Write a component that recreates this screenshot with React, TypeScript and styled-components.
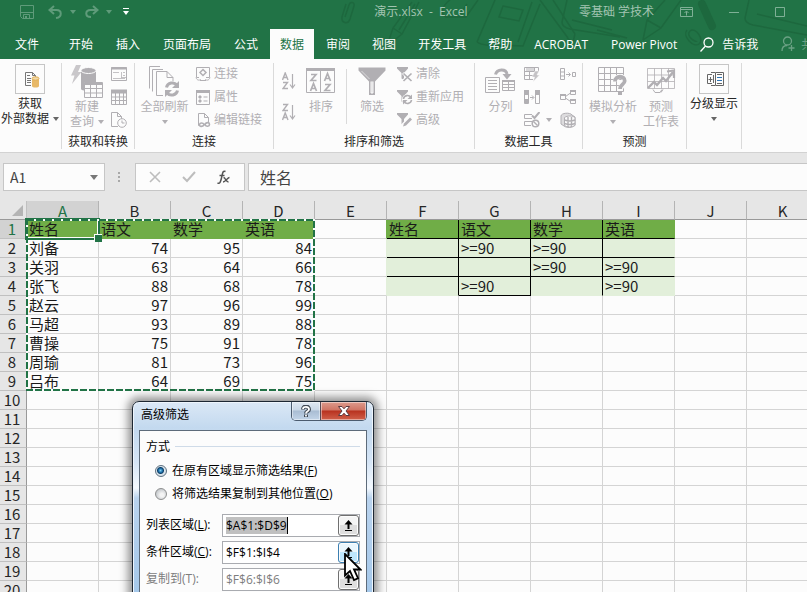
import React from "react";
import styled, { createGlobalStyle } from "styled-components";

const GREEN = "#217346";
const ICON = "#b1afb3";
const INK = "#333333";

const Global = createGlobalStyle`
  * { box-sizing: border-box; }
  body { margin: 0; }
  button, input { font: inherit; color: inherit; margin: 0; }
  button { padding: 0; border: 0; background: none; }
  svg { display: block; flex: none; }
`;

const Page = styled.div`
  display: flex;
  flex-direction: column;
  height: 100vh;
  overflow: hidden;
  background: #fcfcfc;
  font: 12px/15px "Open Sans", "Noto Sans CJK SC", sans-serif;
  color: ${INK};
`;

/* ---------- window header ---------- */

const Header = styled.header`
  position: relative;
  flex: none;
  background: ${GREEN};
  color: #ffffff;
`;

const Pattern = styled.svg`
  position: absolute;
  top: 0;
  right: 0;
`;

const TitleBar = styled.div`
  position: relative;
  display: flex;
  align-items: center;
  height: 23px;
  color: #a2c4b1;
  white-space: nowrap;
`;

const QuickAccess = styled.div`
  display: flex;
  align-items: center;
  gap: 8px;
  width: 263px;
  padding-left: 20px;
  flex: none;
`;

const IconButton = styled.button`
  display: flex;
  align-items: center;
  justify-content: center;
`;

const SaveButton = styled(IconButton)`
  margin-right: 6px;
`;

const UndoGroup = styled.div`
  display: flex;
  align-items: center;
  gap: 7px;
`;

const Title = styled.h1`
  flex: 1;
  margin: 0;
  font-size: 12px;
  font-weight: 400;
  text-align: center;
  white-space: pre;
`;

const WindowControls = styled.div`
  display: flex;
  align-items: center;
  gap: 36px;
  margin: 0 22px 0 26px;
`;

const Tabs = styled.nav`
  position: relative;
  display: flex;
  height: 36px;
  padding: 6px 0 0 5px;
  white-space: nowrap;
`;

const TabGroup = styled.div<{ $gap: number; $after: number }>`
  display: flex;
  gap: ${(p) => p.$gap}px;
  margin-right: ${(p) => p.$after}px;
`;

const Tab = styled.button<{ $active?: boolean }>`
  display: flex;
  align-items: center;
  gap: 8px;
  padding: 0 10px;
  height: 30px;
  color: ${(p) => (p.$active ? GREEN : "#ffffff")};
  background: ${(p) => (p.$active ? "#fcfcfc" : "transparent")};
`;

const ShareTab = styled(Tab)`
  gap: 6px;
  color: #6ba184;
`;

/* ---------- ribbon ---------- */

const Ribbon = styled.div`
  display: flex;
  flex: none;
  padding-top: 3px;
  border-bottom: 1px solid #d2d2d2;
  background: #fcfcfc;
  white-space: nowrap;
`;

const Group = styled.section<{ $width: number }>`
  position: relative;
  flex: none;
  display: flex;
  flex-direction: column;
  width: ${(p) => p.$width}px;
  border-right: 1px solid #dadada;
  margin: 1px 0 3px;
`;

const GroupBody = styled.div<{ $pad: number; $gap: number }>`
  display: flex;
  align-items: flex-start;
  height: 69px;
  margin-top: -1px;
  padding-left: ${(p) => p.$pad}px;
  gap: ${(p) => p.$gap}px;
`;

const GroupLabel = styled.h2`
  margin: 3px 0 0;
  font-size: 12px;
  font-weight: 400;
  text-align: center;
  line-height: 15px;
  color: #262626;
`;

const BigButton = styled.button<{ $on?: boolean; $width: number }>`
  display: flex;
  flex-direction: column;
  align-items: center;
  width: ${(p) => p.$width}px;
  height: 69px;
  color: ${(p) => (p.$on ? "#262626" : ICON)};
`;

const IconSlot = styled.span<{ $height: number }>`
  display: flex;
  justify-content: center;
  align-items: center;
  height: ${(p) => p.$height}px;
`;

const FramedIcon = styled.span`
  display: block;
  border: 1px solid #c6c6c6;
`;

const Line = styled.span`
  display: flex;
  align-items: center;
  justify-content: center;
  gap: 4px;
  height: 15px;
`;

const SmallColumn = styled.div`
  display: flex;
  flex-direction: column;
`;

const SmallButton = styled.button`
  display: flex;
  align-items: center;
  gap: 3px;
  height: 23px;
  color: ${ICON};
`;

const SortColumn = styled.div`
  display: flex;
  flex-direction: column;
  gap: 13px;
  padding-top: 10px;
`;

const Divider = styled.div`
  width: 1px;
  height: 55px;
  margin-top: 7px;
  background: #dadada;
`;

const Caret = ({ color = ICON }: { color?: string }) => (
  <svg width="6" height="4" viewBox="0 0 6 4" aria-hidden="true">
    <path d="M0 0h6L3 4z" fill={color} />
  </svg>
);

/* ---------- formula bar ---------- */

const FormulaBar = styled.div`
  display: flex;
  flex: none;
  padding: 10px 0 10px 3px;
  background: #e6e6e6;
`;

const Box = styled.div`
  display: flex;
  align-items: center;
  height: 28px;
  border: 1px solid #c6c6c6;
  background: #fcfcfc;
`;

const NameBox = styled(Box)`
  width: 102px;
  padding-right: 6px;
`;

const NameInput = styled.input`
  flex: 1;
  min-width: 0;
  border: 0;
  padding: 0 0 0 6px;
  background: none;
  font: 14px/20px "Noto Sans CJK SC", sans-serif;
  color: #444;
  outline: none;
`;

const Grip = styled.svg`
  margin: 9px 14px 0 13px;
`;

const FormulaButtons = styled(Box)`
  width: 110px;
  justify-content: space-around;
  padding: 0 2px;
  margin-right: 3px;
`;

const FormulaField = styled(Box)`
  flex: 1;
  border-right: 0;
`;

const FormulaInput = styled.input`
  width: 100%;
  border: 0;
  padding: 0 0 0 11px;
  background: none;
  font: 16px/24px "Noto Sans CJK SC", sans-serif;
  color: #444;
  outline: none;
`;

/* ---------- sheet ---------- */

const Sheet = styled.main`
  position: relative;
  flex: 1;
  min-height: 0;
  overflow: hidden;
  background: #fcfcfc;
`;

const Grid = styled.table`
  border-collapse: separate;
  border-spacing: 0;
  table-layout: fixed;
  width: 819px;
  font: 15px/18px "Noto Sans CJK SC", sans-serif;
  color: #1a1a1a;
`;

const RowCol = styled.col`
  width: 27px;
`;

const DataCol = styled.col`
  width: 72px;
`;

const Corner = styled.td`
  height: 19px;
  padding: 0 0 0 12px;
  background: #e6e6e6;
  border-right: 1px solid #c0c0c0;
  border-bottom: 1px solid #999;
`;

const ColHead = styled.th<{ $active: boolean }>`
  height: 19px;
  padding: 2px 0 0;
  font-weight: 400;
  line-height: 16px;
  text-align: center;
  color: ${(p) => (p.$active ? GREEN : "#262626")};
  background: ${(p) => (p.$active ? "#d2d2d2" : "#e6e6e6")};
  border-right: 1px solid #b4b4b4;
  border-bottom: 1px solid #999;
`;

const RowHead = styled.th<{ $active: boolean }>`
  height: 19px;
  padding: 0 2px 0 0;
  font-weight: 400;
  text-align: center;
  color: ${(p) => (p.$active ? GREEN : "#262626")};
  background: ${(p) => (p.$active ? "#d2d2d2" : "#e6e6e6")};
  border-right: 1px solid #999;
  border-bottom: 1px solid #c0c0c0;
`;

const Cell = styled.td<{ $fill: string; $right: string; $bottom: string; $number: boolean }>`
  height: 19px;
  padding: 0 2px;
  text-align: ${(p) => (p.$number ? "right" : "left")};
  white-space: nowrap;
  background: ${(p) => p.$fill};
  border-right: 1px solid ${(p) => p.$right};
  border-bottom: 1px solid ${(p) => p.$bottom};
`;

const Ants = styled.svg`
  position: absolute;
  left: 26px;
  top: 18px;
`;

const Selection = styled.div`
  position: absolute;
  left: 25px;
  top: 17px;
  width: 75px;
  height: 22px;
  border: 2px solid ${GREEN};
  box-shadow: inset 0 0 0 1px #fcfcfc;

  &::after {
    content: "";
    position: absolute;
    right: -4px;
    bottom: -4px;
    width: 7px;
    height: 7px;
    border: solid #fcfcfc;
    border-width: 1px 0 0 1px;
    background: ${GREEN};
  }
`;

/* ---------- dialog ---------- */

const Dialog = styled.form`
  position: absolute;
  left: 132px;
  top: 200px;
  width: 242px;
  padding: 0 6px 7px;
  border: 1px solid #1d2733;
  border-radius: 7px;
  background: linear-gradient(
    #dbe8f6 0,
    #c3d9ef 26px,
    #d5e5f6 60px,
    #f4f9fe 86px,
    #b9d3ee 96px,
    #a5c8ea 190px
  );
  box-shadow: inset 0 0 0 1px #eef5fc, 0 0 8px 4px rgba(40, 40, 40, 0.5);
  color: #000;
`;

const DialogTitle = styled.div`
  display: flex;
  justify-content: space-between;
  height: 28px;
`;

const DialogName = styled.h2`
  margin: 0;
  padding: 5px 0 0 2px;
  font-size: 12px;
  font-weight: 400;
  line-height: 16px;
`;

const CaptionButtons = styled.div`
  display: flex;
  height: 19px;
  border: 1px solid #4b5b6e;
  border-top: 0;
  border-radius: 0 0 5px 5px;
  overflow: hidden;
`;

const CaptionButton = styled.button<{ $close?: boolean }>`
  display: flex;
  align-items: center;
  justify-content: center;
  width: ${(p) => (p.$close ? 46 : 28)}px;
  border-left: ${(p) => (p.$close ? "1px solid #5a4a54" : "0")};
  background: ${(p) =>
    p.$close
      ? "linear-gradient(#dd9b8d 0, #cf7464 8px, #b8321f 9px, #d0604a 18px)"
      : "linear-gradient(#dfe8f2 0, #c9d7e6 8px, #a9bdd3 9px, #c2d4e8 18px)"};
  box-shadow: inset 0 0 0 1px rgba(255, 255, 255, 0.45);
`;

const DialogBody = styled.div`
  padding: 7px 6px 40px;
  border: 1px solid #5d6b7a;
  background: #fcfcfc;
`;

const Fieldset = styled.fieldset`
  min-width: 0;
  margin: 0 0 9px;
  padding: 0;
  border: 0;
`;

const Legend = styled.legend`
  display: flex;
  align-items: center;
  gap: 5px;
  width: 100%;
  height: 16px;
  margin-bottom: 5px;
  padding: 0;

  &::after {
    content: "";
    flex: 1;
    height: 1px;
    background: #cfdbe8;
  }
`;

const RadioRow = styled.label`
  display: flex;
  align-items: center;
  gap: 5px;
  height: 23px;
  padding-left: 9px;
  white-space: nowrap;
`;

const Radio = styled.input`
  appearance: none;
  flex: none;
  width: 12px;
  height: 12px;
  border: 1px solid #8e8f8f;
  border-radius: 50%;
  background: radial-gradient(circle at 60% 60%, #f4f4f4 20%, #bfc3c7 80%);

  &:checked {
    border-color: #5f7180;
    background: radial-gradient(circle at 45% 45%, #7fd0f2 0, #1c6ea8 2px, #0f3f66 3px, #dbe6ee 4px, #d3dbe0 6px);
  }
`;

const Fields = styled.div`
  display: grid;
  grid-template-columns: 76px 1fr;
  row-gap: 4px;
`;

const FieldLabel = styled.label<{ $off?: boolean }>`
  line-height: 22px;
  color: ${(p) => (p.$off ? "#7d7d7d" : "#000")};
`;

const Field = styled.div<{ $off?: boolean }>`
  display: flex;
  align-items: center;
  justify-content: space-between;
  height: 23px;
  padding-left: 3px;
  border: 1px solid #a9abb0;
  background: #ffffff;
  color: ${(p) => (p.$off ? "#7d7d7d" : "#000")};
`;

const RangeInput = styled.input<{ $selected?: boolean }>`
  field-sizing: content;
  max-width: 110px;
  height: 17px;
  border: 0;
  border-right: 1px solid ${(p) => (p.$selected ? "#000" : "transparent")};
  padding: 0;
  background: ${(p) => (p.$selected ? "#c0c0c0" : "transparent")};
  outline: none;
`;

const PickButton = styled.button<{ $hot?: boolean }>`
  display: flex;
  align-items: center;
  justify-content: center;
  width: 21px;
  height: 21px;
  border: 1px solid ${(p) => (p.$hot ? "#3c7fb1" : "#707070")};
  border-radius: 3px;
  box-shadow: inset 0 0 0 1px #fcfcfc;
  background: ${(p) =>
    p.$hot
      ? "linear-gradient(#eaf6fd 50%, #bee6fd 50%)"
      : "linear-gradient(#f4f4f4 50%, #dedede 50%)"};
`;

const Pointer = styled.svg`
  position: absolute;
  left: 211px;
  top: 151px;
`;

/* ---------- icons ---------- */

const Svg = ({ w, h = w, children }: { w: number; h?: number; children: React.ReactNode }) => (
  <svg width={w} height={h} viewBox={`0 0 ${w} ${h}`} fill="none" stroke={ICON} aria-hidden="true">
    {children}
  </svg>
);

const ExternalData = () => (
  <svg width="28" height="28" viewBox="0 0 28 28" fill="none" aria-hidden="true">
    <path d="M15 20.5H9.500v-13h7l3 3V12M16.500 7.500v3h3" stroke="#777" />
    <path d="M11 10.500h3M11 13.500h4M11 15.500h4M11 17.500h4" stroke="#777" />
    <path d="M16 13.500v7.500c0 2 7 2 7 0v-7.500z" fill="#e8b968" />
    <ellipse cx="19.500" cy="13.500" rx="3.500" ry="1.700" fill="#f3d9a6" stroke="#e0ae55" />
  </svg>
);

const NewQuery = () => (
  <Svg w={34}>
    <path d="M6 1h5L8 8h3.500L2 20l2.500-8.500H1z" fill="#c9c7ca" stroke="none" />
    <path d="M11 7v18c0 1 3 1.500 4 1.500V19h11V7z" fill={ICON} stroke="none" />
    <ellipse cx="18.500" cy="6.500" rx="7.500" ry="3" fill={ICON} stroke="#fcfcfc" />
    <path d="M14.500 18.500h18v15h-18z" fill="#fcfcfc" />
    <path d="M14.500 20h18" strokeWidth="2" />
    <path d="M14.500 24.500h18M14.500 29h18M20.500 20v13M26.500 20v13" />
  </Svg>
);

const ShowQueries = () => (
  <Svg w={16}>
    <path d="M.5 1.500h15v13H.5z" />
    <path d="M0 2.500h16" strokeWidth="2" />
    <path d="M2 6.500h6M10.500 6v6M12 6.500h2M12 9.500h2M10.500 11.500h5M2 12.500h12" strokeOpacity=".75" />
  </Svg>
);

const FromTable = () => (
  <Svg w={16}>
    <path d="M.5 1.500h15v14H.5z" />
    <path d="M0 2.500h16" strokeWidth="4" />
    <path d="M0 8h16M0 11.500h16M4.500 4v12M8.500 4v12M12.500 4v12" />
  </Svg>
);

const RecentSources = () => (
  <Svg w={16}>
    <path d="M7 14.500H.5V.5h6l4 4V7M6.500.5v4h4" />
    <circle cx="11" cy="11" r="4.300" fill="#fcfcfc" />
    <path d="M11 8.500V11h2.500" />
  </Svg>
);

const RefreshAll = () => (
  <Svg w={32}>
    <path d="M.5 23.500v-22H11M3.500 26.500v-22H14M14 30.500H7.500v-24H18l6 6V18M18 6.500v6h6" />
    <circle cx="23" cy="24" r="8" fill="#fcfcfc" stroke="none" />
    <path d="M17.500 22.500c1-5 7.500-6 10.500-2.500M28.500 25.500c-1 5-7.500 6-10.500 2.500" strokeWidth="3" />
    <path d="M30 16v7h-7zM16 32v-7h7z" fill={ICON} stroke="none" />
  </Svg>
);

const Connections = () => (
  <Svg w={16}>
    <path d="M4 11.500H1.500v-10h13v10H11M5 14.500h6" />
    <path d="M8 3.500l3 3-3 3-3-3z" strokeWidth="1.500" />
    <path d="M1 11.500c1 3 3 3 5 2M15 11.500c-1 3-3 3-5 2" />
  </Svg>
);

const Properties = () => (
  <Svg w={16}>
    <path d="M1.500 1.500h13v14h-13z" />
    <path d="M1 2.500h14" strokeWidth="3" />
    <path d="M4 7h2v2H4zM4 11h2v2H4z" fill={ICON} />
    <path d="M8.500 8h4M8.500 12h4" />
  </Svg>
);

const EditLinks = () => (
  <Svg w={16}>
    <path d="M4 13.500H3.500V1.500h6l4 4V10M9.500 1.500v4h4" />
    <path d="M9 12.500c-1-2-4-2-4.500 0s2.500 3 5 0 5-2 5 0-3.500 2.500-4.500 0" strokeWidth="1.600" />
  </Svg>
);

const SortIcon = ({ down }: { down?: boolean }) => (
  <Svg w={14} h={18}>
    <path d={down ? "M1 1.500h4.500L1 7.500h5" : "M.5 8L3.200 1 6 8M1.500 5.500h3.500"} strokeWidth="1.400" />
    <path d={down ? "M.5 17l2.700-7L6 17M1.500 14.500h3.500" : "M1 10.500h4.500L1 16.500h5"} strokeWidth="1.400" />
    <path d="M10.500 2v13.500M8 12.500l2.500 3.500 2.500-3.500" strokeWidth="1.200" />
  </Svg>
);

const SortDialog = () => (
  <Svg w={30} h={26}>
    <path d="M.5.5h28v24H.5zM14.500 3v22" />
    <path d="M0 1.500h29" strokeWidth="3" />
    <path d="M5 6.500h5L5 12.500h5.500M4.500 23l3-7.500 3 7.500M5.500 20.500h4" strokeWidth="1.700" />
    <path d="M18.500 13l3-7.500 3 7.500M19.500 10.500h4M19 16.500h5L19 22.500h5.500" strokeWidth="1.700" />
  </Svg>
);

const FilterBig = () => (
  <Svg w={28}>
    <path d="M.5.500h27v3L17 14.500V28h-6V14.500L.5 3.500z" fill={ICON} stroke="none" />
    <path d="M13 14.500V26h2V14.500" stroke="#fcfcfc" fill="#d8d7d9" />
    <path d="M3.500 4l8 8" stroke="#dcdbdd" />
  </Svg>
);

const FunnelSmall = "M0 1h11v1.500L7 7v7L4.500 12.500V7L0 2.500z";

const ClearFilter = () => (
  <Svg w={16}>
    <path d={FunnelSmall} fill={ICON} stroke="none" />
    <path d="M6 7l8.500 8M14.500 7L6 15" stroke="#fcfcfc" strokeWidth="3" />
    <path d="M6.500 7.500l8 7.500M14.500 7.500l-8 7.500" strokeWidth="1.700" />
  </Svg>
);

const Reapply = () => (
  <Svg w={16}>
    <path d={FunnelSmall} fill={ICON} stroke="none" />
    <circle cx="10.500" cy="10.500" r="5.500" fill="#fcfcfc" stroke="none" />
    <path d="M6.500 10c.5-4 5.500-4.500 7.500-1.500M14.500 11c-.5 4-5.500 4.500-7.500 1.500" strokeWidth="1.600" />
    <path d="M15 5.500V10h-4.500zM6 15.500V11h4.500z" fill={ICON} stroke="none" />
  </Svg>
);

const Advanced = () => (
  <Svg w={16}>
    <path d={FunnelSmall} fill={ICON} stroke="none" />
    <path d="M5 15l9-9" stroke="#fcfcfc" strokeWidth="5" />
    <path d="M6 14.500l1-3 6-6 2 2-6 6z" fill={ICON} stroke="none" />
  </Svg>
);

const TextToColumns = () => (
  <Svg w={31} h={26}>
    <path d="M.5 9.500h14v15H.5z" />
    <path d="M3 12.500h9M3 15.500h9M3 18.500h9M3 21.500h9" />
    <path d="M17.500 12.500h12v10h-12zM17 16.500h13M17 19.500h13M23.500 14v9" />
    <path d="M17 13h13" strokeWidth="2" />
    <path d="M10.500 6.500C12 .500 21 .500 22 6" strokeWidth="3" />
    <path d="M17.500 6h9L22 11.500z" fill={ICON} stroke="none" />
  </Svg>
);

const FlashFill = () => (
  <Svg w={16}>
    <path d="M9 13.500H.5v-12h14V6" />
    <path d="M1 5.500h13M1 9.500h8M5.500 2v11M10.500 2v4" />
    <path d="M2 2h8v3H2z" fill="#d8d7d9" stroke="none" />
    <path d="M11 5h4l-2 4h2.500L9 16l1.500-5H8z" fill="#c4c2c5" stroke="#fcfcfc" strokeWidth=".5" />
  </Svg>
);

const RemoveDuplicates = () => (
  <Svg w={16}>
    <path d="M.5 1.500h4v13h-4zM11.500 1.500h4v13h-4z" />
    <path d="M0 1h5v5H0zM0 10h5v4H0zM11 1h5v5h-5z" fill={ICON} stroke="none" />
    <path d="M6 8.500h3.500M8 6.500l2 2-2 2" />
  </Svg>
);

const Validation = () => (
  <Svg w={16}>
    <path d="M8 6.500H.5v-4H8M7 13.500H.5v-4H8" />
    <path d="M8 3.500l2.500 2.500 5-6" strokeWidth="2" />
    <circle cx="11.500" cy="11.500" r="3.300" strokeWidth="1.500" />
    <path d="M9.500 9.500l4 4" strokeWidth="1.500" />
  </Svg>
);

const Consolidate = () => (
  <Svg w={16}>
    <path d="M.5 2.500h4v11h-4zM.5 6h4M.5 10h4M12.500 6.500h3v4h-3z" />
    <path d="M6 8.500h4M8.500 6.500l2 2-2 2" />
  </Svg>
);

const Relationships = () => (
  <Svg w={16}>
    <path d="M.5 5.500h5v5h-5zM10.500 1.500h5v4h-5zM10.500 10.500h5v4h-5z" />
    <path d="M0 6h6M10 2h6M10 11h6" strokeWidth="2" />
    <path d="M5.500 7.500l5-3.500M5.500 9l5 3.500" />
  </Svg>
);

const DataModel = () => (
  <Svg w={16}>
    <path d="M1 4c0-3 9-4 11-1l3 2v8c-2 3-9 3-11 1l-3-2z" fill="#dddcde" />
    <path d="M4.500 5.500c3-2 8-2 10.500 0v8c-3 2-8 2-10.500 0z" fill="#fcfcfc" />
    <path d="M4.500 8c3 1 8 1 10.500 0M4.500 11.500c3 1 8 1 10.500 0M8 5v10M11.500 5v10" strokeWidth="1.400" />
  </Svg>
);

const WhatIf = () => (
  <Svg w={30}>
    <path d="M.5 1.500h25v24H.5zM.5 7.500h25M.5 13.500h25M.5 19.500h25M6.500 1.500v24M12.500 1.500v24M18.500 1.500v24" />
    <path d="M17.500 15.500c0-7 10-6 9.500 0 0 3.500-4.500 3-4.500 8M22.500 26v3.500" stroke="#fcfcfc" strokeWidth="5" />
    <path d="M17 15.500c0-6.500 10-6 9.700-.5-.2 3.500-4.700 3.500-4.700 8" strokeWidth="3.800" />
    <path d="M20 25.500h4V29h-4z" fill={ICON} stroke="none" />
  </Svg>
);

const Forecast = () => (
  <Svg w={29} h={27}>
    <path d="M.5 1.500h27v20H.5zM.5 8h27M.5 14.500h27M7.500 1.500v20M14.500 1.500v20M21.500 1.500v20" strokeOpacity=".8" />
    <path d="M1 21l6-6 3 3 6-7 3 3 7-9" strokeWidth="2.400" />
    <path d="M20 4.500l7-1v7.500" strokeWidth="2.200" />
    <path d="M6 22.500l2 3h5l2-3M16 22.500l-2 3" />
  </Svg>
);

const Outline = () => (
  <svg width="28" height="28" viewBox="0 0 28 28" fill="none" stroke="#666" aria-hidden="true">
    <path d="M12 9.500H7.500v9H12M10.500 12v5M8.500 14.500h4M13.500 10v8M11 7.500h4M11 20.500h4" />
    <path d="M15.500 7.500h8v13h-8z" />
    <path d="M17 9.500h5M17 18.500h5" />
    <path d="M17 12.500h5M17 15.500h5" stroke="#2e75b6" />
  </svg>
);

const UndoIcon = ({ flip }: { flip?: boolean }) => (
  <svg width="15" height="14" viewBox="0 0 15 14" fill="none" stroke="#5f9b7a" strokeWidth="2" aria-hidden="true">
    <path
      d={flip ? "M13 5H6.500C1 5 .500 12 7 12M9 1l4.500 4L9 9" : "M2 5h6.500c5.500 0 6 7-.5 8M6 1L1.500 5 6 9"}
    />
  </svg>
);

const PickArrow = () => (
  <svg width="11" height="11" viewBox="0 0 11 11" fill="none" stroke="#000" aria-hidden="true">
    <path d="M5.500 2v7" strokeWidth="2" />
    <path d="M5.500 0l4 4.500h-8z" fill="#000" stroke="none" />
    <path d="M2 10.500h7" />
  </svg>
);

/* ---------- data ---------- */

const COLUMNS = "ABCDEFGHIJK".split("");
const SUBJECTS = ["姓名", "语文", "数学", "英语"];
const SCORES: (string | number)[][] = [
  ["刘备", 74, 95, 84],
  ["关羽", 63, 64, 66],
  ["张飞", 88, 68, 78],
  ["赵云", 97, 96, 99],
  ["马超", 93, 89, 88],
  ["曹操", 75, 91, 78],
  ["周瑜", 81, 73, 96],
  ["吕布", 64, 69, 75],
];
const CRITERIA = [
  ["", ">=90", ">=90", ""],
  ["", "", ">=90", ">=90"],
  ["", ">=90", "", ">=90"],
];
const LINE = "#d4d4d4";
const HEAD_FILL = "#70ad47";
const PALE_FILL = "#e2efda";

function cellAt(row: number, col: number) {
  let value: string | number = "";
  let fill = "#fcfcfc";
  let right = LINE;
  let bottom = LINE;
  const inCriteria = col >= 5 && col <= 8 && row <= 3;
  if (col <= 3) {
    if (row === 0) {
      value = SUBJECTS[col];
      fill = right = bottom = HEAD_FILL;
    } else if (row <= SCORES.length) {
      value = SCORES[row - 1][col];
    }
  } else if (inCriteria) {
    value = row === 0 ? SUBJECTS[col - 5] : CRITERIA[row - 1][col - 5];
    fill = row === 0 ? HEAD_FILL : PALE_FILL;
    right = col < 8 ? "#000" : fill;
    bottom = row < 3 || col === 6 ? "#000" : fill;
  } else if (col === 4 && row <= 3) {
    right = row === 0 ? HEAD_FILL : PALE_FILL;
  }
  return { value, fill, right, bottom };
}

/* ---------- sections ---------- */

const TopBar = () => (
  <Header>
    <Pattern width="480" height="59" viewBox="0 0 480 59" fill="none" stroke="#1d683e" strokeWidth="1.500" aria-hidden="true">
      <path d="M19 4l-4 13c-1 6 6 8 8 2l4-13c1-4-4-5-5-1l-4 12" />
      <path d="M60 46l6-18L85 2M60 46l15-12L92 2M66 28l9 6M72 30L88 4" />
      <path d="M123 0c-8 6-10 14-4 17h20l12-17M140 4l-8 12" />
      <path d="M150 42l18-42M150 42c8 6 30 2 46 4l17-42M176 6l20 4-4 11-20-4zM205 2l-14 40" />
      <path d="M213 0l28 38M226 0l22 34M240 38l6 4 2-8" />
      <path d="M240 0l-5 22c0 4 4 6 8 7l50 8M270 30l30 8M245 20l40 10" />
      <path d="M316 40l4-20L338 0M316 40l18-12L354 0M320 20l14 8" />
      <path d="M360 30c-5 6 6 18 12 14s-4-18-9-13 6 12 7 10" />
      <path d="M375 4l10 22" strokeWidth="8" strokeLinecap="round" />
      <path d="M422 0l-4 18c0 4 4 6 8 7l54 10M430 14l50 12" />
    </Pattern>
    <TitleBar>
      <QuickAccess>
        <SaveButton aria-label="保存">
          <svg width="14" height="14" viewBox="0 0 14 14" fill="none" stroke="#5f9b7a" aria-hidden="true">
            <path d="M.5.5h13v13H2.500l-2-2zM1 7.500h12M3.500 13v-3.500h6V13" />
            <path d="M5 11h2v2.500H5z" fill="#5f9b7a" stroke="none" />
          </svg>
        </SaveButton>
        <UndoGroup>
          <IconButton aria-label="撤消"><UndoIcon /></IconButton>
          <Caret color="#5f9b7a" />
        </UndoGroup>
        <UndoGroup>
          <IconButton aria-label="恢复"><UndoIcon flip /></IconButton>
          <Caret color="#5f9b7a" />
        </UndoGroup>
        <IconButton aria-label="自定义快速访问工具栏">
          <svg width="10" height="7" viewBox="0 0 10 7" aria-hidden="true">
            <path d="M3 0h6v1H3zM3 3h6L6 7z" fill="#fff" />
          </svg>
        </IconButton>
      </QuickAccess>
      <Title>{"演示.xlsx  -  Excel"}</Title>
      <span>零基础 学技术</span>
      <WindowControls>
        <IconButton aria-label="功能区显示选项">
          <svg width="13" height="10" viewBox="0 0 13 10" fill="none" stroke="#7fb096" aria-hidden="true">
            <path d="M.5.5h12v9H.5zM1 2.500h11M6.500 8.500v-4M4.500 6l2-2 2 2" />
          </svg>
        </IconButton>
        <IconButton aria-label="最小化">
          <svg width="10" height="10" viewBox="0 0 10 10" stroke="#7fb096" aria-hidden="true">
            <path d="M0 5.500h10" />
          </svg>
        </IconButton>
        <IconButton aria-label="最大化">
          <svg width="10" height="10" viewBox="0 0 10 10" fill="none" stroke="#7fb096" aria-hidden="true">
            <path d="M.5.500h9v9h-9z" />
          </svg>
        </IconButton>
      </WindowControls>
    </TitleBar>
    <Tabs>
      <TabGroup $gap={0} $after={10}>
        <Tab>文件</Tab>
      </TabGroup>
      <TabGroup $gap={3} $after={2}>
        {["开始", "插入", "页面布局", "公式"].map((t) => (
          <Tab key={t}>{t}</Tab>
        ))}
      </TabGroup>
      <TabGroup $gap={2} $after={3}>
        {["数据", "审阅", "视图", "开发工具", "帮助", "ACROBAT"].map((t) => (
          <Tab key={t} $active={t === "数据"}>{t}</Tab>
        ))}
      </TabGroup>
      <TabGroup $gap={3} $after={0}>
        <Tab>Power Pivot</Tab>
        <Tab>
          <svg width="14" height="15" viewBox="0 0 14 15" fill="none" stroke="#fff" strokeWidth="1.300" aria-hidden="true">
            <circle cx="8.500" cy="5.500" r="4.500" />
            <path d="M5.500 9L.5 14.500" />
          </svg>
          告诉我
        </Tab>
        <ShareTab>
          <svg width="14" height="16" viewBox="0 0 14 16" fill="none" stroke="#6ba184" strokeWidth="1.300" aria-hidden="true">
            <circle cx="6.500" cy="5" r="4" />
            <path d="M1 15c0-3.500 2-5.500 5-5.500M10.500 9v6M7.500 12h6" />
          </svg>
          共享
        </ShareTab>
      </TabGroup>
    </Tabs>
  </Header>
);

type Entry = { icon: React.ReactNode; text?: string; label?: string; more?: boolean };

const SmallList = ({ items }: { items: Entry[] }) => (
  <SmallColumn>
    {items.map((it, i) => (
      <SmallButton key={i} aria-label={it.label}>
        {it.icon}
        {it.text}
        {it.more && (
          <>
            <span />
            <Caret />
          </>
        )}
      </SmallButton>
    ))}
  </SmallColumn>
);

const RibbonBar = () => (
  <Ribbon>
    <Group $width={62}>
      <GroupBody $pad={0} $gap={0}>
        <BigButton $on $width={60}>
          <IconSlot $height={34}><FramedIcon><ExternalData /></FramedIcon></IconSlot>
          <Line>获取</Line>
          <Line>外部数据<Caret color="#666" /></Line>
        </BigButton>
      </GroupBody>
    </Group>
    <Group $width={73}>
      <GroupBody $pad={7} $gap={6}>
        <BigButton $width={36}>
          <IconSlot $height={37}><NewQuery /></IconSlot>
          <Line>新建</Line>
          <Line>查询<Caret /></Line>
        </BigButton>
        <SmallList
          items={[
            { icon: <ShowQueries />, label: "显示查询" },
            { icon: <FromTable />, label: "从表格" },
            { icon: <RecentSources />, label: "最近使用的源" },
          ]}
        />
      </GroupBody>
      <GroupLabel>获取和转换</GroupLabel>
    </Group>
    <Group $width={139}>
      <GroupBody $pad={5} $gap={6}>
        <BigButton $width={49}>
          <IconSlot $height={37}><RefreshAll /></IconSlot>
          <Line>全部刷新</Line>
          <Line><Caret /></Line>
        </BigButton>
        <SmallList
          items={[
            { icon: <Connections />, text: "连接" },
            { icon: <Properties />, text: "属性" },
            { icon: <EditLinks />, text: "编辑链接" },
          ]}
        />
      </GroupBody>
      <GroupLabel>连接</GroupLabel>
    </Group>
    <Group $width={201}>
      <GroupBody $pad={8} $gap={10}>
        <SortColumn>
          <IconButton aria-label="升序"><SortIcon /></IconButton>
          <IconButton aria-label="降序"><SortIcon down /></IconButton>
        </SortColumn>
        <BigButton $width={30}>
          <IconSlot $height={37}><SortDialog /></IconSlot>
          <Line>排序</Line>
        </BigButton>
        <Divider />
        <BigButton $width={30}>
          <IconSlot $height={37}><FilterBig /></IconSlot>
          <Line>筛选</Line>
        </BigButton>
        <SmallList
          items={[
            { icon: <ClearFilter />, text: "清除" },
            { icon: <Reapply />, text: "重新应用" },
            { icon: <Advanced />, text: "高级" },
          ]}
        />
      </GroupBody>
      <GroupLabel>排序和筛选</GroupLabel>
    </Group>
    <Group $width={108}>
      <GroupBody $pad={10} $gap={8}>
        <BigButton $width={31}>
          <IconSlot $height={37}><TextToColumns /></IconSlot>
          <Line>分列</Line>
        </BigButton>
        <SmallList
          items={[
            { icon: <FlashFill />, label: "快速填充" },
            { icon: <RemoveDuplicates />, label: "删除重复值" },
            { icon: <Validation />, label: "数据验证", more: true },
          ]}
        />
        <SmallList
          items={[
            { icon: <Consolidate />, label: "合并计算" },
            { icon: <Relationships />, label: "关系" },
            { icon: <DataModel />, label: "管理数据模型" },
          ]}
        />
      </GroupBody>
      <GroupLabel>数据工具</GroupLabel>
    </Group>
    <Group $width={104}>
      <GroupBody $pad={5} $gap={5}>
        <BigButton $width={50}>
          <IconSlot $height={37}><WhatIf /></IconSlot>
          <Line>模拟分析</Line>
          <Line><Caret /></Line>
        </BigButton>
        <BigButton $width={36}>
          <IconSlot $height={37}><Forecast /></IconSlot>
          <Line>预测</Line>
          <Line>工作表</Line>
        </BigButton>
      </GroupBody>
      <GroupLabel>预测</GroupLabel>
    </Group>
    <Group $width={55}>
      <GroupBody $pad={2} $gap={0}>
        <BigButton $on $width={50}>
          <IconSlot $height={34}><FramedIcon><Outline /></FramedIcon></IconSlot>
          <Line>分级显示</Line>
          <Line><Caret color="#666" /></Line>
        </BigButton>
      </GroupBody>
    </Group>
  </Ribbon>
);

const Formula = () => (
  <FormulaBar>
    <NameBox>
      <NameInput aria-label="名称框" defaultValue="A1" />
      <svg width="8" height="5" viewBox="0 0 8 5" aria-hidden="true"><path d="M0 0h8L4 5z" fill="#777" /></svg>
    </NameBox>
    <Grip width="3" height="12" viewBox="0 0 3 12" fill="#a8a8a8" aria-hidden="true">
      <path d="M0 0h2v2H0zM0 4h2v2H0zM0 8h2v2H0z" />
    </Grip>
    <FormulaButtons>
      <IconButton aria-label="取消">
        <svg width="12" height="12" viewBox="0 0 12 12" stroke="#bdbdbd" strokeWidth="1.600" aria-hidden="true">
          <path d="M1 1l10 10M11 1L1 11" />
        </svg>
      </IconButton>
      <IconButton aria-label="输入">
        <svg width="14" height="12" viewBox="0 0 14 12" fill="none" stroke="#bdbdbd" strokeWidth="2" aria-hidden="true">
          <path d="M1 6l4 4 8-9" />
        </svg>
      </IconButton>
      <IconButton aria-label="插入函数">
        <svg width="14" height="15" viewBox="0 0 14 15" fill="none" stroke="#555" aria-hidden="true">
          <path d="M8.500 1.500C5.500 0 5.500 4 4.500 8S3 14 .5 13M2.500 5.500h5" strokeWidth="1.500" />
          <path d="M6.500 7.500c2 0 2.500 4.500 5 4.500M12.500 7.500c-2 0-4 4.500-6.500 4.500" strokeWidth="1.300" />
        </svg>
      </IconButton>
    </FormulaButtons>
    <FormulaField>
      <FormulaInput aria-label="编辑栏" defaultValue="姓名" />
    </FormulaField>
  </FormulaBar>
);

const Worksheet = () => (
  <>
    <Grid>
      <colgroup>
        <RowCol />
        {COLUMNS.map((c) => <DataCol key={c} />)}
      </colgroup>
      <thead>
        <tr>
          <Corner>
            <svg width="11" height="11" viewBox="0 0 11 11" aria-hidden="true"><path d="M11 0v11H0z" fill="#b4b4b4" /></svg>
          </Corner>
          {COLUMNS.map((c) => (
            <ColHead key={c} scope="col" $active={c === "A"}>{c}</ColHead>
          ))}
        </tr>
      </thead>
      <tbody>
        {Array.from({ length: 20 }, (_, row) => (
          <tr key={row}>
            <RowHead scope="row" $active={row === 0}>{row + 1}</RowHead>
            {COLUMNS.map((c, col) => {
              const cell = cellAt(row, col);
              return (
                <Cell
                  key={c}
                  $fill={cell.fill}
                  $right={cell.right}
                  $bottom={cell.bottom}
                  $number={typeof cell.value === "number"}
                >
                  {cell.value}
                </Cell>
              );
            })}
          </tr>
        ))}
      </tbody>
    </Grid>
    <Selection />
    <Ants width="290" height="173" viewBox="0 0 290 173" fill="none" aria-hidden="true">
      <rect x="1" y="1" width="287" height="170" stroke="#fcfcfc" strokeWidth="2" />
      <rect x="1" y="1" width="287" height="170" stroke={GREEN} strokeWidth="2" strokeDasharray="7 2" />
    </Ants>
  </>
);

const FilterDialog = () => (
  <Dialog onSubmit={(e) => e.preventDefault()} aria-label="高级筛选">
    <DialogTitle>
      <DialogName>高级筛选</DialogName>
      <CaptionButtons>
        <CaptionButton type="button" aria-label="帮助">
          <svg width="10" height="13" viewBox="0 0 10 13" fill="none" aria-hidden="true">
            <path d="M2 4.500c0-4 6-4 6 0 0 2-3 1.500-3 4M5 9.500V12" stroke="#3f4854" strokeWidth="4" />
            <path d="M2 4c0-3 6-3 6 .5 0 2-3 1.500-3 4M5 9.800v1.700" stroke="#fff" strokeWidth="1.800" />
          </svg>
        </CaptionButton>
        <CaptionButton type="button" $close aria-label="关闭">
          <svg width="12" height="10" viewBox="0 0 12 10" aria-hidden="true">
            <path d="M.5.500h3.500l2 2.300L8 .5h3.500L8 5l3.500 4.500H8L6 7.200 4 9.500H.5L4 5z" fill="#fff" stroke="#5b3a40" />
          </svg>
        </CaptionButton>
      </CaptionButtons>
    </DialogTitle>
    <DialogBody>
      <Fieldset>
        <Legend>方式</Legend>
        <RadioRow>
          <Radio type="radio" name="mode" defaultChecked />
          <span>在原有区域显示筛选结果(<u>F</u>)</span>
        </RadioRow>
        <RadioRow>
          <Radio type="radio" name="mode" />
          <span>将筛选结果复制到其他位置(<u>O</u>)</span>
        </RadioRow>
      </Fieldset>
      <Fields>
        <FieldLabel htmlFor="list-range">列表区域(<u>L</u>):</FieldLabel>
        <Field>
          <RangeInput id="list-range" $selected defaultValue="$A$1:$D$9" />
          <PickButton type="button" aria-label="选择列表区域"><PickArrow /></PickButton>
        </Field>
        <FieldLabel htmlFor="criteria-range">条件区域(<u>C</u>):</FieldLabel>
        <Field>
          <RangeInput id="criteria-range" defaultValue="$F$1:$I$4" />
          <PickButton type="button" $hot aria-label="选择条件区域"><PickArrow /></PickButton>
        </Field>
        <FieldLabel htmlFor="copy-to" $off>复制到(T):</FieldLabel>
        <Field $off>
          <RangeInput id="copy-to" defaultValue="$F$6:$I$6" />
          <PickButton type="button" aria-label="选择复制位置"><PickArrow /></PickButton>
        </Field>
      </Fields>
    </DialogBody>
    <Pointer width="18" height="30" viewBox="0 0 18 30" aria-hidden="true">
      <path d="M1 1v21.500l5-4.500 4 9 4-1.800-4-8.700h6.500z" fill="#fff" stroke="#000" strokeWidth="1.800" />
    </Pointer>
  </Dialog>
);

export default function App() {
  return (
    <Page>
      <Global />
      <TopBar />
      <RibbonBar />
      <Formula />
      <Sheet>
        <Worksheet />
        <FilterDialog />
      </Sheet>
    </Page>
  );
}
